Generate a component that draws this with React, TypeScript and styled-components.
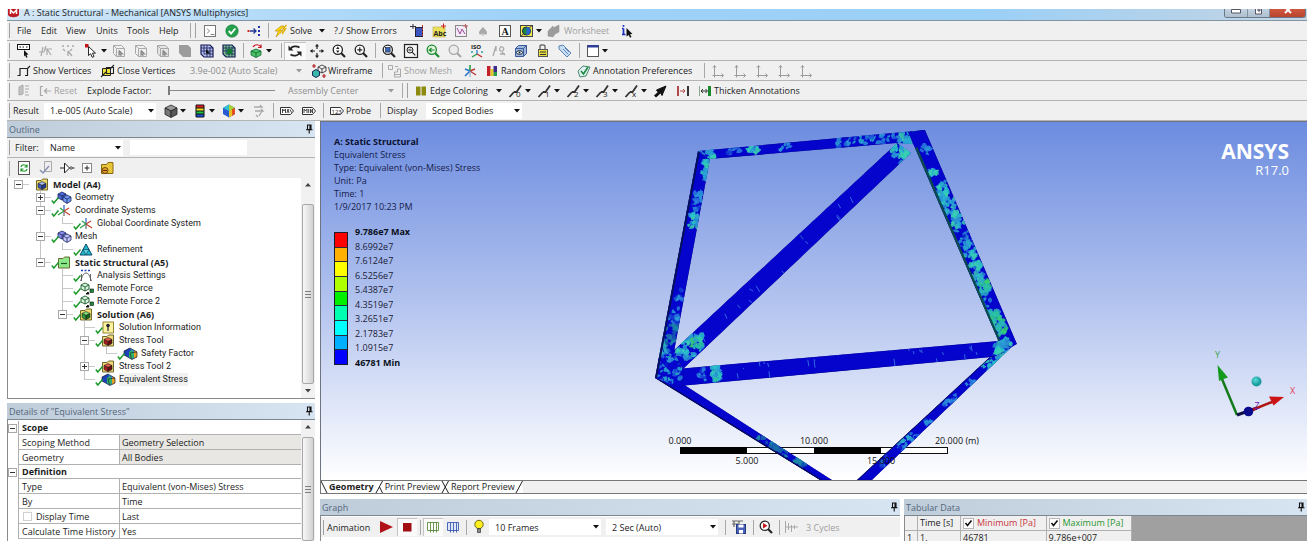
import React from "react";
import styled, { createGlobalStyle, css } from "styled-components";

const GlobalStyle = createGlobalStyle`
  *, *::before, *::after { box-sizing: border-box; }
  body { margin: 0; background: #fff; }
  body, button, input, select {
    font-family: "Open Sans", "Noto Sans", sans-serif;
    font-size: 9px;
    line-height: 13px;
    color: #1c1c1c;
  }
  button { border: 0; padding: 0; background: none; cursor: pointer; }
`;

/* ---------- shell ---------- */

const Page = styled.div`
  height: 100vh;
  padding: 9px 2px 5px 7px;
  display: flex;
  flex-direction: column;
  overflow: hidden;
`;

const TitleBar = styled.header`
  display: flex;
  align-items: flex-start;
  flex: none;
  height: 12px;
  overflow: hidden;
  background: linear-gradient(90deg, #d3e6f5 0, #b3dbf8 20%, #9fd2f8 40%, #9bd0f7 75%, #b4d2ea 90%, #c6d6e4 100%);
  border-bottom: 1px solid #8394a3;
`;

const TitleText = styled.h1`
  flex: 1;
  margin: -3px 0 0 1px;
  font-size: 9px;
  font-weight: 400;
  line-height: 13px;
  white-space: nowrap;
`;

const WindowButtons = styled.div`
  display: flex;
  height: 9px;
  margin-right: 1px;
  border: 1px solid #68798a;
  border-top: 0;
  border-radius: 0 0 3px 3px;
  overflow: hidden;
`;

const WindowButton = styled.button<{ $close?: boolean }>`
  display: flex;
  justify-content: center;
  width: ${(p) => (p.$close ? 36 : 22)}px;
  background: ${(p) => (p.$close ? "linear-gradient(#d0573f, #b9432c)" : "linear-gradient(#c3d2e0, #aebfd0)")};
  & + & { border-left: 1px solid #8293a4; }
`;

const Main = styled.main`
  flex: 1;
  min-height: 0;
  display: grid;
  grid-template-columns: 308px minmax(0, 1fr);
  gap: 5px;
`;

const Column = styled.div<{ $gap?: number }>`
  display: flex;
  flex-direction: column;
  min-width: 0;
  min-height: 0;
  gap: ${(p) => p.$gap ?? 0}px;
`;

/* ---------- toolbars ---------- */

const Toolbar = styled.div<{ $plain?: boolean }>`
  display: flex;
  align-items: center;
  flex: none;
  height: 20px;
  background: #f0f0f0;
  white-space: nowrap;
  overflow: hidden;
  ${(p) => !p.$plain && css`border-bottom: 1px solid #b4b4b4;`}
`;

const Grip = styled.span`
  flex: none;
  width: 6px;
  height: 15px;
  &::before {
    content: "";
    display: block;
    width: 1px;
    height: 15px;
    margin-left: 2px;
    background: #a0a0a0;
  }
`;

const Sep = styled.span`
  flex: none;
  width: 6px;
  height: 15px;
  &::before {
    content: "";
    display: block;
    width: 1px;
    height: 15px;
    margin-left: 3px;
    background: #a8a8a8;
  }
`;

const Gap = styled.span<{ $w: number }>`
  flex: none;
  width: ${(p) => p.$w}px;
`;

const IconButton = styled.button<{ $on?: boolean; $tight?: boolean }>`
  display: flex;
  align-items: center;
  justify-content: center;
  flex: none;
  width: ${(p) => (p.$tight ? 20 : 22)}px;
  height: 18px;
  ${(p) => p.$on && css`background: #fafafa; box-shadow: inset 1px 1px 0 #c4c4c4;`}
`;

const LabelButton = styled.button<{ $w: number; $off?: boolean; $pad?: number; $gap?: number }>`
  display: flex;
  align-items: center;
  gap: ${(p) => p.$gap ?? 1}px;
  flex: none;
  width: ${(p) => p.$w}px;
  padding-left: ${(p) => p.$pad ?? 0}px;
  color: ${(p) => (p.$off ? "#a0a0a0" : "#1c1c1c")};
  white-space: nowrap;
`;

const Caption = styled.label<{ $w: number; $pad?: number }>`
  flex: none;
  width: ${(p) => p.$w}px;
  padding-left: ${(p) => p.$pad ?? 0}px;
`;

const MenuButton = styled.button`
  display: flex;
  align-items: center;
  flex: none;
  width: 24px;
  height: 18px;
`;

const CaretBox = styled.button`
  display: flex;
  align-items: center;
  justify-content: center;
  flex: none;
  width: 8px;
  height: 18px;
`;

const ComboBox = styled.span<{ $w: number; $white?: boolean }>`
  display: grid;
  grid-template-columns: minmax(0, 1fr) 10px;
  align-items: center;
  flex: none;
  width: ${(p) => p.$w}px;
  height: 16px;
  background: ${(p) => (p.$white ? "#fff" : "transparent")};
  select {
    grid-area: 1 / 1 / 2 / 3;
    appearance: none;
    height: 16px;
    border: 0;
    padding: 0 0 0 6px;
    background: none;
    opacity: 1;
  }
  select:disabled { color: #8e8e8e; }
  svg { grid-area: 1 / 2; pointer-events: none; justify-self: center; }
`;

const Slider = styled.input`
  appearance: none;
  flex: none;
  width: 107px;
  height: 10px;
  margin: 0;
  background: linear-gradient(#8a8a8a, #8a8a8a) center / 100% 1px no-repeat;
  &::-webkit-slider-thumb {
    appearance: none;
    width: 2px;
    height: 9px;
    background: #7a7a7a;
  }
`;

const Svg = styled.svg`
  display: block;
  flex: none;
  width: 16px;
  height: 16px;
`;

const CaretSvg = styled.svg`
  display: block;
  flex: none;
  width: 6px;
  height: 4px;
`;

const Caret = ({ off }: { off?: boolean }) => (
  <CaretSvg viewBox="0 0 6 4"><path d="M0 0h6L3 3.6z" fill={off ? "#9a9a9a" : "#111"} /></CaretSvg>
);

function Combo({ id, value, w, white, off, label }: { id: string; value: string; w: number; white?: boolean; off?: boolean; label?: string }) {
  return (
    <ComboBox $w={w} $white={white}>
      <select id={id} disabled={off} defaultValue={value} aria-label={label}>
        <option>{value}</option>
      </select>
      <Caret off={off} />
    </ComboBox>
  );
}

/* ---------- icons ---------- */

const G = "#a9a9a9";

const Lens = ({ c = "#222", fill = "#fff", children }: { c?: string; fill?: string; children?: React.ReactNode }) => (
  <>
    <path d="M10 10l4 4" stroke={c} strokeWidth="2.2" />
    <circle cx="6.8" cy="6.8" r="4.6" fill={fill} stroke={c} strokeWidth="1.3" />
    {children}
  </>
);

const Cube = ({ top, left, right, line = "#222" }: { top: string; left: string; right: string; line?: string }) => (
  <g stroke={line} strokeWidth=".8" strokeLinejoin="round">
    <path d="M2 5l6-3 6 3-6 3z" fill={top} />
    <path d="M2 5l6 3v6.4L2 11.4z" fill={left} />
    <path d="M14 5L8 8v6.4l6-3z" fill={right} />
  </g>
);

const SelBox = ({ fill = "none", c = G }: { fill?: string; c?: string }) => (
  <g stroke={c} fill="none">
    <path d="M2.500 2.500h8l3 3v8h-8l-3-3z" fill={fill} />
    <path d="M2.500 2.500l3 3h8M5.500 5.500v8" />
    <path d="M8 7.500v4.500l1.200-1 1 2M8 7.500l3.500 3.500H9.500" strokeWidth="1.200" stroke="#8a8a8a" />
  </g>
);

const EdgeMark = ({ n }: { n: string }) => (
  <>
    <path d="M1.500 14L6 9M6 9h2.500L13 2.500" stroke="#333" strokeWidth="1.800" fill="none" />
    <text x="8" y="14" fontSize="8" fill="#222">{n}</text>
  </>
);

const icons: Record<string, React.ReactNode> = {
  console: <><rect x="2.500" y="2.500" width="11" height="11" fill="#fff" stroke="#777" /><path d="M5 5.500l2.500 2.500L5 10.500M8.500 11.500h4" stroke="#888" fill="none" /></>,
  check: <><circle cx="8" cy="8" r="6.200" fill="#23a04c" stroke="#11763a" strokeWidth=".6" /><path d="M4.800 8l2.300 2.600L11.300 5.500" stroke="#fff" strokeWidth="1.900" fill="none" /></>,
  align: <><path d="M1.500 8h2" stroke="#c22" strokeWidth="2" /><path d="M4 8h6M7.500 5.500L10 8l-2.500 2.500" stroke="#223a9a" fill="none" strokeWidth="1.300" /><path d="M13 3v10" stroke="#2233aa" strokeWidth="2" strokeDasharray="2 2" /></>,
  bolt: <><path d="M8 3L2 8h3.500L3 14l7-6.500H6.500L11 3z" fill="#ffd400" stroke="#b98a00" strokeWidth=".6" /><path d="M13.500 2L10 6h2.500L9 11" stroke="#e0b000" strokeWidth="1.400" fill="none" /></>,
  newPlane: <><path d="M1 3.500h6M4 1v5" stroke="#334" /><rect x="6.500" y="4.500" width="7" height="9" fill="#3d55c0" stroke="#223" /><path d="M13.500 2v12" stroke="#b33" strokeDasharray="2 1" /></>,
  abc: <><rect x="2" y="4" width="12" height="10" fill="#ece25a" stroke="#b8aa40" strokeWidth=".6" /><text x="2.500" y="12.500" fontSize="7" fontWeight="700" fill="#222">Abc</text><path d="M10 3h5M12.500.5v5" stroke="#c22" /></>,
  chart: <><rect x="2.500" y="2.500" width="11" height="11" fill="#f3ecf6" stroke="#888" /><path d="M4 5l3 6 2-5 3 5" stroke="#a04aa0" fill="none" /><path d="M10 3h5M12.500 1v4" stroke="#c66" /></>,
  spade: <path d="M8 4c3 3 4 4 4 6s-3 2-3.500 0v3h-1v-3C7 12 4 12 4 10s1-3 4-6z" fill={G} />,
  letterA: <><rect x="2.500" y="2.500" width="11" height="11" fill="#fff" stroke="#555" /><text x="4.500" y="12" fontSize="10" fontWeight="700" fontFamily="Liberation Serif, serif" fill="#111">A</text></>,
  picture: <><rect x="1.500" y="2.500" width="12" height="11" fill="#f5e84a" stroke="#444" /><path d="M1.500 13.500l3-2.500M13.500 2.500l-3 2" stroke="#444" /><circle cx="7.500" cy="8" r="4" fill="#1e8a4a" stroke="#124" /><path d="M7.500 4a4 4 0 010 8z" fill="#2a62c8" /></>,
  worksheet: <path d="M1 8l5-5v2l6-3v7l-4 2-2 3-5-1z" fill="#9c9c9c" stroke="#8c8c8c" strokeWidth=".5" />,
  infoCursor: <><path d="M4.500 2v1.800M4.500 5.500v6M3 5.500h1.500M3 11.500h3.500" stroke="#1b2fc0" strokeWidth="1.700" fill="none" /><path d="M7.500 5l6 6-2.500.2L12.500 14l-1.500.8-1.300-2.900L7.500 13.500z" fill="#111" /></>,

  pickLabel: <><rect x="1.500" y="1.500" width="12" height="5" fill="#fff" stroke="#111" /><path d="M3.500 4h1.500M6.500 4H8M10 4h1.500" stroke="#111" /><path d="M8 7l4.500 4.500-2 .2 1 2.500-1.200.6-1.200-2.600L8 13.500z" fill="#111" /></>,
  grayPick1: <path d="M1 9h5M5 4l-2 9M8 3L6 9M7 6l7 0M9 6l4 6M9 6v6" stroke={G} fill="none" strokeWidth="1.200" />,
  grayPick2: <path d="M2 3h2M7 3h2M12 3h2M3 6l2 2M12 6l-2 2M8 8l4 5M8 8v5" stroke={G} fill="none" strokeWidth="1.300" />,
  cursor: <><rect x="1" y="1" width="3.500" height="3.500" fill="#c4161c" /><path d="M4.500 3.500v9l2.200-1.800 1.500 3.600 1.800-.8-1.500-3.400h3z" fill="#fff" stroke="#111" strokeWidth=".9" /></>,
  selVertex: <SelBox />,
  selEdge: <SelBox />,
  selFace: <SelBox fill="#e4e4e4" />,
  selBody: <path d="M2 2h9l3 3v9H6L2 10z" fill="#9c9c9c" />,
  selNode: <><path d="M2 2h9l3 3v9H5L2 11z" fill="#b7c3ee" stroke="#141a55" strokeWidth="1.200" /><path d="M5 2v9M8 2v12M2 5h12M2 8h12M5 11h9M11 4v10" stroke="#141a55" strokeWidth=".8" /><path d="M7 6l4.500 4.500H7z" fill="#111" /></>,
  selElem: <><path d="M2 2h9l3 3v9H5L2 11z" fill="#7fc694" stroke="#141a55" strokeWidth="1.200" /><path d="M5 2v9M8 2v12M2 5h12M2 8h12M5 11h9M11 4v10" stroke="#141a55" strokeWidth=".8" /><rect x="6" y="6" width="5" height="5" fill="#127a32" /></>,
  extend: <><path d="M2 8l5-2 5 2v4l-5 2.500L2 12z" fill="#4cc36a" stroke="#14662c" strokeWidth=".8" /><path d="M2 8l5 2 5-2M7 10v4.500" stroke="#14662c" fill="none" strokeWidth=".8" /><path d="M4 4c2-3 6-3 8 0M12 1.500V4.500H9" stroke="#c4161c" fill="none" strokeWidth="1.200" /></>,
  rotate: <><path d="M3.500 6c1-3 6-3.500 9-1.500M12.500 10c-1 3-6 3.500-9 1.500" stroke="#222" fill="none" strokeWidth="1.700" /><path d="M1.500 2.500v5h5zM14.500 13.500v-5h-5z" fill="#222" /></>,
  pan: <><path d="M8 3v3M8 10v3M3 8h3M10 8h3" stroke="#222" strokeWidth="1.200" /><path d="M8 .8L10 3.600H6zM8 15.200L6 12.400h4zM.8 8l2.800-2v4zM15.200 8l-2.800 2V6z" fill="#222" /></>,
  zoomUpDown: <Lens><path d="M6.800 3.500L8.500 6H5.100zM6.800 10.100L5.100 7.600h3.400z" fill="#222" /></Lens>,
  zoomIn: <Lens><path d="M4.300 6.800h5M6.800 4.300v5" stroke="#222" strokeWidth="1.200" /></Lens>,
  zoomBlue: <Lens><rect x="4.500" y="4.500" width="4.600" height="4.600" fill="#3a63b8" stroke="#123" strokeWidth=".6" /></Lens>,
  zoomBox: <><rect x="1.500" y="1.500" width="13" height="13" fill="#f4f4f4" stroke="#222" strokeWidth="1.200" /><circle cx="7" cy="7" r="3" fill="#ddd" stroke="#222" /><path d="M5.500 7h3M9.300 9.300l3 3" stroke="#222" strokeWidth="1.200" /></>,
  zoomGreen: <Lens c="#1b8a2c" fill="#dff3df"><path d="M9.500 7H4.500l2-2M4.500 7l2 2" stroke="#1b8a2c" strokeWidth="1.200" fill="none" /></Lens>,
  zoomGray: <Lens c="#a6a6a6" fill="#ececec" />,
  iso: <><text x="2" y="6" fontSize="6" fontWeight="700" fill="#111">ISO</text><path d="M8 7v5" stroke="#2a8ad0" strokeWidth="1.400" /><path d="M8 11l-5 3" stroke="#27a045" strokeWidth="1.400" /><path d="M8 11l5 3" stroke="#c03030" strokeWidth="1.400" /><circle cx="3" cy="9" r="1" fill="#27a0a0" /><circle cx="13" cy="9" r="1" fill="#27a0a0" /></>,
  lookAt: <path d="M2 13L5 3M5 3v5M9 4c4-1 5 3 2 4s-3-3-1-4M11 9l3 3M9 11h5" stroke={G} fill="none" strokeWidth="1.300" />,
  blueBox: <><path d="M2.500 5.500l3-3h8v8l-3 3h-8z" fill="#9fb6dd" stroke="#3b5a99" /><path d="M2.500 5.500h8v8M10.500 5.500l3-3" stroke="#3b5a99" fill="none" /><ellipse cx="6.500" cy="9.500" rx="3" ry="1.800" fill="#fff" stroke="#123" /><circle cx="6.500" cy="9.500" r="1" fill="#123" /></>,
  stackTag: <><path d="M5 6V3c0-1.500 5-1.500 5 0v3" fill="none" stroke="#555" strokeWidth="1.200" /><rect x="3.500" y="6.500" width="9" height="7" fill="#e7de3f" stroke="#555" /><path d="M5 9h6M5 11.500h6" stroke="#333" /></>,
  tag: <><path d="M2 3l4-1 8 8-4 4-8-8z" fill="#c6dcf2" stroke="#4b78ac" strokeWidth=".9" /><path d="M6 6l5 5M8 5l4 4" stroke="#4b78ac" strokeWidth=".8" /></>,
  windowIcon: <><rect x="2.500" y="2.500" width="11" height="11" fill="#fff" stroke="#555" /><rect x="2.500" y="2" width="11" height="2.500" fill="#2d3f9a" /></>,

  showVert: <path d="M1.500 12.500H4V5.500h7.500v7H9M11.500 5.500L14 3" stroke="#222" fill="none" strokeWidth="1.200" />,
  closeVert: <><path d="M2.500 5.500h8v7h-8z" fill="#f0e23a" stroke="#222" /><path d="M6.500 4.500h7v6h-7zM1 14l5-5M10 6l4-4" stroke="#222" fill="none" strokeWidth="1.100" /></>,
  wireframe: <><path d="M7 4l4-2 4 2v4l-4 2-4-2z" fill="#f4f4f4" stroke="#222" strokeWidth=".8" /><path d="M7 4l4 2 4-2M11 6v4" stroke="#222" strokeWidth=".8" fill="none" /><path d="M1.500 8.500l3.500-2 3.500 2v4L5 14.500l-3.500-2z" fill="#37b8a8" stroke="#114" strokeWidth=".9" /><path d="M3 1v4M1 3h4M13 11v4M11 13h4" stroke="#b02020" strokeWidth="1.200" /></>,
  showMesh: <path d="M1.500 2.500h4v4h-4zM8 3.500h3M10.500 6v3h-3v5h6V6zM7.500 11.500h6" stroke={G} fill="none" />,
  axes: <><path d="M8 8V2" stroke="#27a045" strokeWidth="1.600" /><path d="M8 8l6 4M8 8l5-2" stroke="#c03a3a" strokeWidth="1.400" /><path d="M8 8l-5 5M8 8L3 6" stroke="#2d77c8" strokeWidth="1.600" /><path d="M8 8v6" stroke="#7ac" /></>,
  random: <><path d="M3 3h3.500v10H3z" fill="#c4202a" /><path d="M6.500 6h3v7h-3z" fill="#e7c62a" /><path d="M9.500 3H13v6H9.500z" fill="#3a2c8a" /><path d="M9.500 9H13v4H9.500z" fill="#2a9a4a" /></>,
  annotate: <><path d="M2 8l5-5 7 1-4 9-6 1z" fill="#dff0f4" stroke="#4a8a6a" /><path d="M5 8l2.500 3L12 4" stroke="#1b8a3c" strokeWidth="1.600" fill="none" /></>,
  triad1: <path d="M4.500 2.500v10h9M3 4.500l1.500-2 1.500 2M11.500 10.500l2 2-2 2M2.500 12.500h4M4.500 10.500v4" stroke="#9a9a9a" fill="none" />,

  explode: <path d="M3 12V4l4-2v9zM9 3h4M9 6h4M9 9h3M9 12h4" fill="#c2c2c2" stroke={G} />,
  reset: <path d="M6 3.500H3.500v9H6M14 8H7.500M10 5.500L7.500 8l2.500 2.500" stroke={G} fill="none" strokeWidth="1.200" />,
  edgeColor: <><rect x="3" y="3.500" width="4.500" height="9" fill="#8d8a10" /><rect x="8.500" y="3.500" width="4.500" height="9" fill="#8d8a10" /></>,
  boldArrow: <><path d="M2 13.500L7 9" stroke="#111" strokeWidth="3" /><path d="M3.500 7L13 3l-4 9.500-1.500-3-3-1z" fill="#111" stroke="#111" /></>,
  narrow: <><path d="M3 3v10" stroke="#b04a4a" strokeWidth="2" /><path d="M13 3v10" stroke="#333" strokeWidth="2" /><path d="M5 8h5M8 6l2 2-2 2" stroke="#b04a4a" fill="none" /></>,
  thicken: <><path d="M2.500 3v10" stroke="#8a8" /><path d="M12.500 3v10" stroke="#1b8a2c" strokeWidth="3" /><path d="M4 8h6M6 6L4 8l2 2M8.500 6l2 2-2 2" stroke="#333" fill="none" /></>,

  cubeGray: <Cube top="#9a9a9a" left="#777" right="#585858" />,
  bands: <><path d="M4 2h8v3H4z" fill="#e02020" /><path d="M4 5h8v3H4z" fill="#f2e020" /><path d="M4 8h8v3H4z" fill="#20c040" /><path d="M4 11h8v3H4z" fill="#2050d0" /><path d="M4 2h8v12H4zM4 5h8M4 8h8M4 11h8" stroke="#111" fill="none" /></>,
  cubeColor: <><path d="M8 1.500l6 3.500v6L8 14.500 2 11V5z" fill="#2a5ad0" /><path d="M2 5l6-3.500L8 8z" fill="#30c0d0" /><path d="M8 1.500L14 5 8 8z" fill="#a8d830" /><path d="M14 5v6l-3 2V6z" fill="#e05020" /><path d="M8 8l3-1.500V13l-3 1.500z" fill="#e8c020" /></>,
  vectors: <path d="M3 4h8l-2-2M4 8h8l-2-2M11 8l-3 5M5 12l2 2" stroke={G} fill="none" strokeWidth="1.300" />,
  max: <><path d="M1.500 4.500h10l3 3.500-3 3.500h-10z" fill="#fff" stroke="#333" /><path d="M3.500 10V6l1.500 2L6.500 6v4M8 10l1-4 1 4M11 6.500l1.500 3" stroke="#333" fill="none" strokeWidth=".9" /></>,
  min: <><path d="M1.500 4.500h10l3 3.500-3 3.500h-10z" fill="#fff" stroke="#333" /><path d="M3 10V6l1.500 2L6 6v4M7.700 6v4M9.500 10V6l2 4V6" stroke="#333" fill="none" strokeWidth=".9" /></>,
  probe: <><path d="M1.500 4.500h10l3 3.500-3 3.500h-10z" fill="#fff" stroke="#333" /><text x="2.500" y="10.500" fontSize="6" fill="#222">123</text></>,

  refresh: <><rect x="2.500" y="1.500" width="11" height="13" fill="#fff" stroke="#555" /><path d="M5 7c.5-3 5-3 6 0M11 9c-.5 3-5 3-6 0M11 4.500V7H8.500M5 11.500V9h2.500" stroke="#1b9a2c" fill="none" strokeWidth="1.200" /></>,
  docCheck: <><path d="M6.500 1.500h7v10h-7z" fill="#eee" stroke="#aaa" /><path d="M2 10l3 3 6-7" stroke="#8a8fb5" strokeWidth="1.500" fill="none" /></>,
  gate: <><path d="M5.500 3v10l5-5z" fill="#fff" stroke="#222" /><path d="M1 8h4M13 8h2.500" stroke="#222" /><circle cx="12" cy="8" r="1.200" fill="#fff" stroke="#222" strokeWidth=".8" /></>,
  plusBox: <><rect x="3.500" y="3.500" width="9" height="9" fill="#fff" stroke="#888" /><path d="M5.500 8h5M8 5.500v5" stroke="#222" /></>,
  folderLock: <><path d="M2.500 4.500h5l1.500-2h5v11H2.500z" fill="#e8c63a" stroke="#8a6a10" /><circle cx="6" cy="10.500" r="3" fill="#e0a02a" stroke="#5a2a08" strokeWidth=".8" /><path d="M4 10.500h4" stroke="#5a2a08" /></>,

  play: <path d="M2 2l13 6-13 6z" fill="#b01218" />,
  stop: <path d="M4 4h8.500v8.500H4z" fill="#a00d12" />,
  frames1: <path d="M2.500 3.500h11v8h-11zM5.500 3.500v10M8.500 3.500v10M11.500 3.500v10" stroke="#5a8a3a" fill="#fff" strokeWidth=".9" />,
  frames2: <path d="M2.500 3.500h11v8h-11zM5.500 3.500v10M8.500 3.500v10M11.500 3.500v10" stroke="#3a5ab0" fill="#dfe6f6" strokeWidth=".9" />,
  bulb: <><circle cx="8" cy="5.500" r="4.200" fill="#ffee20" stroke="#6a6a10" /><path d="M6.500 9.500h3v4h-3z" fill="#888" stroke="#333" strokeWidth=".7" /></>,
  save: <><path d="M1 2h11M1 5h6M3 2v6M8 2v3" stroke="#666" strokeWidth="1.200" /><rect x="5.500" y="5.500" width="9" height="9" fill="#4a63b8" stroke="#223a80" /><path d="M7.500 5.500h5v3h-5zM8 11h4v3.500H8z" fill="#fff" /></>,
  zoomPlay: <Lens c="#222"><path d="M5 4l4.500 2.800L5 9.600z" fill="#c01818" /></Lens>,
  cycles: <path d="M2.500 2v12M2 8h13M5.500 4v7M8.500 6v7M11.500 6v4" stroke={G} fill="none" />,
};

const Icon = ({ n }: { n: string }) => <Svg viewBox="0 0 16 16" aria-hidden="true">{icons[n]}</Svg>;
const Tool = ({ n, on, tight }: { n: string; on?: boolean; tight?: boolean }) => (
  <IconButton $on={on} $tight={tight} aria-label={n}><Icon n={n} /></IconButton>
);
const Menu = ({ n }: { n: string }) => <MenuButton aria-label={n}><Icon n={n} /><Gap $w={1} /><Caret /></MenuButton>;

const EdgeMenu = ({ n }: { n: string }) => (
  <MenuButton aria-label={"Edges " + n}><Svg viewBox="0 0 16 16"><EdgeMark n={n} /></Svg><Gap $w={1} /><Caret /></MenuButton>
);

const menus: [string, number][] = [["File", 24], ["Edit", 25], ["View", 30], ["Units", 31], ["Tools", 32], ["Help", 32]];

function Toolbars() {
  return (
    <>
      <Toolbar as="nav">
        <Grip />
        {menus.map(([name, w]) => <LabelButton key={name} $w={w} $pad={4}>{name}</LabelButton>)}
        <Sep /><Grip />
        <Tool n="console" /><Tool n="check" /><Tool n="align" />
        <Sep /><Gap $w={2} />
        <LabelButton $w={45}><Icon n="bolt" />Solve</LabelButton>
        <CaretBox aria-label="Solve options"><Caret /></CaretBox><Gap $w={4} />
        <LabelButton $w={76} $pad={4}>?./ Show Errors</LabelButton>
        {["newPlane", "abc", "chart", "spade", "letterA"].map((n) => <Tool key={n} n={n} />)}
        <Gap $w={3} /><Menu n="picture" /><Gap $w={4} />
        <LabelButton $w={69} $off><Icon n="worksheet" />Worksheet</LabelButton>
        <Tool n="infoCursor" />
      </Toolbar>
      <Toolbar>
        <Grip />
        {["pickLabel", "grayPick1", "grayPick2"].map((n) => <Tool key={n} n={n} />)}
        <Gap $w={5} /><Menu n="cursor" />
        {["selVertex", "selEdge", "selFace", "selBody", "selNode", "selElem"].map((n) => <Tool key={n} n={n} />)}
        <Sep /><Gap $w={3} /><Menu n="extend" /><Gap $w={5} />
        <Sep /><Tool n="rotate" on />
        {["pan", "zoomUpDown", "zoomIn"].map((n) => <Tool key={n} n={n} />)}
        <Sep />
        {["zoomBlue", "zoomBox", "zoomGreen", "zoomGray", "iso", "lookAt", "blueBox", "stackTag", "tag"].map((n) => <Tool key={n} n={n} />)}
        <Sep /><Gap $w={3} /><Menu n="windowIcon" />
      </Toolbar>
      <Toolbar>
        <Grip /><Gap $w={3} />
        <LabelButton $w={84}><Icon n="showVert" />Show Vertices</LabelButton>
        <LabelButton $w={84}><Icon n="closeVert" />Close Vertices</LabelButton>
        <Combo id="tolerance" label="Vertex tolerance" value="3.9e-002 (Auto Scale)" w={120} off /><Gap $w={7} />
        <LabelButton $w={68}><Icon n="wireframe" />Wireframe</LabelButton>
        <Sep /><Gap $w={2} />
        <LabelButton $w={72} $off><Icon n="showMesh" />Show Mesh</LabelButton>
        <Tool n="axes" /><Gap $w={3} />
        <LabelButton $w={92}><Icon n="random" />Random Colors</LabelButton>
        <LabelButton $w={125}><Icon n="annotate" />Annotation Preferences</LabelButton>
        <Sep />
        {[1, 2, 3, 4, 5].map((k) => <Tool key={k} n="triad1" />)}
      </Toolbar>
      <Toolbar>
        <Grip /><Tool n="explode" /><Gap $w={2} />
        <LabelButton $w={46} $off><Icon n="reset" />Reset</LabelButton>
        <Caption htmlFor="explode" $w={78} $pad={4}>Explode Factor:</Caption><Gap $w={7} />
        <Slider id="explode" type="range" min={0} max={100} defaultValue={0} /><Gap $w={7} />
        <Combo id="center" label="Explode center" value="Assembly Center" w={114} off /><Gap $w={3} />
        <Sep /><Grip /><Gap $w={2} />
        <LabelButton $w={82}><Icon n="edgeColor" />Edge Coloring</LabelButton>
        <CaretBox aria-label="Edge coloring options"><Caret /></CaretBox>
        {["0", "1", "2", "3", "x"].map((n) => <React.Fragment key={n}><Gap $w={5} /><EdgeMenu n={n} /></React.Fragment>)}
        <Gap $w={2} /><Tool n="boldArrow" /><Tool n="narrow" /><Gap $w={3} />
        <LabelButton $w={110}><Icon n="thicken" />Thicken Annotations</LabelButton>
      </Toolbar>
      <Toolbar>
        <Grip />
        <Caption htmlFor="result" $w={31}>Result</Caption>
        <Combo id="result" value="1.e-005 (Auto Scale)" w={112} white /><Gap $w={7} />
        <Menu n="cubeGray" /><Gap $w={5} /><Menu n="bands" /><Gap $w={5} /><Menu n="cubeColor" /><Gap $w={3} />
        <Tool n="vectors" /><Sep /><Tool n="max" /><Tool n="min" /><Sep /><Gap $w={3} />
        <LabelButton $w={48}><Icon n="probe" />Probe</LabelButton>
        <Sep />
        <Caption htmlFor="display" $w={43} $pad={4}>Display</Caption>
        <Combo id="display" value="Scoped Bodies" w={96} white />
      </Toolbar>
    </>
  );
}

/* ---------- panels ---------- */

const Panel = styled.section<{ $grow?: boolean; $h?: number }>`
  display: flex;
  flex-direction: column;
  min-width: 0;
  min-height: 0;
  flex: ${(p) => (p.$grow ? "1 1 0" : "none")};
  ${(p) => p.$h && css`height: ${p.$h}px;`}
  overflow: hidden;
`;

const PanelHead = styled.h2`
  display: flex;
  align-items: center;
  justify-content: space-between;
  flex: none;
  height: 17px;
  margin: 0;
  padding: 0 1px 0 2px;
  font-size: 9px;
  font-weight: 400;
  color: #54667a;
  background: linear-gradient(90deg, #bfcddb, #d7e5f3);
  border-bottom: 1px solid #7d8790;
`;

const PinSvg = styled.svg`
  width: 10px;
  height: 10px;
`;

const Pin = () => (
  <PinSvg viewBox="0 0 10 10"><path d="M3.500 1v4.500h3.500V1zM6 1v4.500M2 5.800h6.500M5.200 6v3.500" stroke="#111" fill="none" strokeWidth="1.100" /></PinSvg>
);

const PinButton = styled.button`
  display: flex;
`;

const Head = ({ title }: { title: string }) => (
  <PanelHead>{title}<PinButton aria-label={"Pin " + title}><Pin /></PinButton></PanelHead>
);

const ScrollBar = styled.div`
  display: flex;
  flex-direction: column;
  align-items: center;
  flex: none;
  width: 14px;
  background: #f1f1f1;
  svg { margin: 5px 0; }
`;

const Thumb = styled.div<{ $top?: number }>`
  display: flex;
  align-items: center;
  justify-content: center;
  flex: 1;
  width: 12px;
  margin-top: ${(p) => p.$top ?? 0}px;
  border: 1px solid #a8a8a8;
  border-radius: 2px;
  background: linear-gradient(90deg, #f7f7f7, #d2d2d2);
  &::before {
    content: "";
    width: 6px;
    height: 7px;
    background: repeating-linear-gradient(#808080 0 1px, transparent 1px 3px);
  }
`;

const Arrow = ({ down }: { down?: boolean }) => (
  <CaretSvg viewBox="0 0 6 4"><path d={down ? "M0 0h6L3 3.500z" : "M0 3.500h6L3 0z"} fill="#444" /></CaretSvg>
);

const SearchBox = styled.input`
  width: 117px;
  height: 15px;
  border: 0;
  background: #fff;
`;

/* ---------- outline tree ---------- */

const TreeArea = styled.div`
  display: flex;
  flex: 1;
  min-height: 0;
  background: #fff;
  border-left: 1px solid #8a8a8a;
  border-bottom: 1px solid #8a8a8a;
`;

const TreeList = styled.ul`
  flex: 1;
  margin: 0 0 0 -1px;
  padding: 0;
  list-style: none;
`;

const TreeItem = styled.li`
  display: flex;
  height: 13px;
  white-space: nowrap;
`;

const Guide = styled.span<{ $line: "none" | "full" | "half"; $elbow?: boolean }>`
  display: flex;
  align-items: center;
  justify-content: center;
  flex: none;
  width: 22px;
  height: 13px;
  background:
    linear-gradient(#c4c4c4, #c4c4c4) 11px 0 / ${(p) => (p.$line === "none" ? "0 0" : p.$line === "full" ? "1px 13px" : "1px 7px")} no-repeat,
    linear-gradient(#cacaca, #cacaca) 11px 6px / ${(p) => (p.$elbow ? "11px 1px" : "0 0")} no-repeat;
`;

const Expander = styled.button`
  display: block;
  width: 9px;
  height: 9px;
  background: #fff;
  svg { display: block; width: 9px; height: 9px; }
`;

const ExpandBox = ({ open }: { open: boolean }) => (
  <Expander aria-label={open ? "Collapse" : "Expand"}>
    <svg viewBox="0 0 9 9"><rect x=".5" y=".5" width="8" height="8" fill="#fff" stroke="#a8a8a8" /><path d={open ? "M2 4.500h5" : "M2 4.500h5M4.500 2v5"} stroke="#333" /></svg>
  </Expander>
);

const NodeSvg = styled.svg`
  display: block;
  flex: none;
  width: 22px;
  height: 13px;
  overflow: visible;
`;

const NodeText = styled.span<{ $bold?: boolean; $picked?: boolean }>`
  margin-left: 2px;
  font-family: ${(p) => (p.$bold ? '"Open Sans", "Noto Sans", sans-serif' : 'Roboto, "Liberation Sans", sans-serif')};
  font-weight: ${(p) => (p.$bold ? 700 : 400)};
  background: ${(p) => (p.$picked ? "#f1f1f1" : "transparent")};
`;

const Folder = ({ fill, children }: { fill: string; children?: React.ReactNode }) => (
  <><path d="M7.500 2.500h4.500l1.500-1.500h5v11h-11z" fill={fill} stroke="#5d5a20" strokeWidth=".9" />{children}</>
);

const MiniCube = ({ a, b, c }: { a: string; b: string; c: string }) => (
  <g stroke="#222" strokeWidth=".6"><path d="M9 5.500l4-2 4 2-4 2z" fill={a} /><path d="M9 5.500l4 2v4l-4-2z" fill={b} /><path d="M17 5.500l-4 2v4l4-2z" fill={c} /></g>
);

const Blocks = ({ a, b }: { a: string; b: string }) => (
  <g stroke="#1a2360" strokeWidth=".8">
    <path d="M7 3l4-2 4 2v4l-4 2-4-2z" fill={a} /><path d="M7 3l4 2 4-2M11 5v4" fill="none" />
    <path d="M12 6l4-2 4 2v4l-4 2.500L12 10z" fill={b} /><path d="M12 6l4 2 4-2M16 8v4" fill="none" />
  </g>
);

const MiniAxes = () => (
  <g fill="none" strokeWidth="1.200"><path d="M13 7V1" stroke="#2a62c8" /><path d="M13 7l6 4M13 7l5-3" stroke="#c8402a" /><path d="M13 7l-6 4M13 7l-4-3" stroke="#27a045" /><path d="M13 7v5" stroke="#666" /></g>
);

const Contour = () => (
  <>
    <path d="M7 4l6-3 7 4v5l-5 2.500L7 8z" fill="#2a7ad0" />
    <path d="M7 4l6-3 1 4-2 5-5-2z" fill="#1e40b8" />
    <path d="M12 5l3-2 2 4-1 5-4-2z" fill="#2cb860" />
    <path d="M17 3.500l3 1.500v5l-3 1.500z" fill="#e8a020" />
    <path d="M7 4l6-3 7 4v5l-5 2.500L7 8zM13 6l7-1M13 6l1.500 6" fill="none" stroke="#223" strokeWidth=".7" />
  </>
);

const Remote = () => (
  <><path d="M8 3l4-2 4 2v4l-4 2-4-2z" fill="#d8f4dc" stroke="#1b5a2c" strokeWidth=".9" /><path d="M8 3l4 2 4-2M12 5v4" stroke="#1b5a2c" fill="none" strokeWidth=".9" /><rect x="17" y="7" width="3.500" height="3.500" fill="#1b8a3c" stroke="#111" strokeWidth=".6" /><path d="M16 12h-3l2-2z" fill="#111" stroke="#111" /></>
);

const nodeIcons: Record<string, React.ReactNode> = {
  model: <Folder fill="#efd96a"><MiniCube a="#9fb8f0" b="#3a5ac0" c="#223a90" /></Folder>,
  geometry: <Blocks a="#4a6ad8" b="#6f9af0" />,
  axes: <MiniAxes />,
  mesh: <Blocks a="#8a90e8" b="#c3c6fa" />,
  refine: <><path d="M13 1l6 11H7z" fill="#22b8c8" stroke="#0a4a6a" /><path d="M10 6.500h6L13 12z" fill="#5cd0dc" stroke="#0a4a6a" strokeWidth=".7" /></>,
  env: <Folder fill="#8de88a"><path d="M10 7.500h6" stroke="#145a1c" strokeWidth="1.200" /></Folder>,
  settings: <><path d="M7 12c2-1 2-8 6-8s4 7 6 8M8.500 12V5M17.500 12V5" stroke="#555" fill="none" strokeWidth=".9" /><path d="M8 1.500h10" stroke="#2a40c0" strokeWidth="1.600" strokeDasharray="2 1.500" /></>,
  remote: <Remote />,
  solution: <Folder fill="#efd96a"><MiniCube a="#7ae07a" b="#28a038" c="#146a20" /></Folder>,
  info: <><rect x="8" y="1" width="10.500" height="11" fill="#fbf3a0" stroke="#8a7a20" strokeWidth=".9" /><circle cx="13" cy="4.500" r="1.800" fill="#223" /><path d="M13 5v5" stroke="#223" strokeWidth="1.200" /></>,
  stress: <Folder fill="#f3d97a"><MiniCube a="#e85a4a" b="#b01a1a" c="#6a0c0c" /></Folder>,
  contour: <Contour />,
};

type Node = { text: string; icon: string; depth: number; guides: boolean[]; last?: boolean; open?: boolean; bold?: boolean; picked?: boolean };

const tree: Node[] = [
  { text: "Model (A4)", icon: "model", depth: 0, guides: [], last: true, open: true, bold: true },
  { text: "Geometry", icon: "geometry", depth: 1, guides: [false], open: false },
  { text: "Coordinate Systems", icon: "axes", depth: 1, guides: [false], open: true },
  { text: "Global Coordinate System", icon: "axes", depth: 2, guides: [false, true], last: true },
  { text: "Mesh", icon: "mesh", depth: 1, guides: [false], open: true },
  { text: "Refinement", icon: "refine", depth: 2, guides: [false, true], last: true },
  { text: "Static Structural (A5)", icon: "env", depth: 1, guides: [false], last: true, open: true, bold: true },
  { text: "Analysis Settings", icon: "settings", depth: 2, guides: [false, false] },
  { text: "Remote Force", icon: "remote", depth: 2, guides: [false, false] },
  { text: "Remote Force 2", icon: "remote", depth: 2, guides: [false, false] },
  { text: "Solution (A6)", icon: "solution", depth: 2, guides: [false, false], last: true, open: true, bold: true },
  { text: "Solution Information", icon: "info", depth: 3, guides: [false, false, false] },
  { text: "Stress Tool", icon: "stress", depth: 3, guides: [false, false, false], open: true },
  { text: "Safety Factor", icon: "contour", depth: 4, guides: [false, false, false, true], last: true },
  { text: "Stress Tool 2", icon: "stress", depth: 3, guides: [false, false, false], open: false },
  { text: "Equivalent Stress", icon: "contour", depth: 3, guides: [false, false, false], last: true, picked: true },
];

function Outline() {
  return (
    <Panel $grow>
      <Head title="Outline" />
      <Toolbar>
        <Grip />
        <Caption htmlFor="filter" $w={31} $pad={2}>Filter:</Caption>
        <Combo id="filter" value="Name" w={79} white /><Gap $w={7} />
        <SearchBox aria-label="Filter text" />
      </Toolbar>
      <Toolbar $plain>
        <Grip />
        {["refresh", "docCheck"].map((n) => <Tool key={n} n={n} />)}
        {["gate", "plusBox", "folderLock"].map((n) => <Tool key={n} n={n} tight />)}
      </Toolbar>
      <TreeArea>
        <TreeList>
          {tree.map((n) => (
            <TreeItem key={n.text}>
              {n.guides.map((g, i) => <Guide key={i} $line={g ? "full" : "none"} />)}
              <Guide $line={n.depth === 0 ? "none" : n.last ? "half" : "full"} $elbow>
                {n.open !== undefined && <ExpandBox open={n.open} />}
              </Guide>
              <NodeSvg viewBox="0 0 22 13">
                {nodeIcons[n.icon]}
                {n.depth > 0 && <path d="M.8 9.500l2 2.500L7.500 6.500" stroke="#1e9a2c" strokeWidth="1.500" fill="none" />}
              </NodeSvg>
              <NodeText $bold={n.bold} $picked={n.picked}>{n.text}</NodeText>
            </TreeItem>
          ))}
        </TreeList>
        <ScrollBar><Arrow /><Thumb $top={12} /><Arrow down /></ScrollBar>
      </TreeArea>
    </Panel>
  );
}

/* ---------- details ---------- */

const DetailsArea = styled.div`
  display: flex;
  flex: 1;
  min-height: 0;
  overflow: hidden;
  border-left: 1px solid #8a8a8a;
`;

const DetailsTable = styled.table`
  flex: 1;
  align-self: flex-start;
  margin-top: 1px;
  border-collapse: separate;
  border-spacing: 0;
  table-layout: fixed;
  col.mark { width: 11px; }
  col.name { width: 100px; }
  td, th {
    height: 15px;
    padding: 0 0 0 3px;
    text-align: left;
    font-weight: 400;
    line-height: 13px;
    border-bottom: 1px solid #b0b0b0;
    white-space: nowrap;
  }
  td.mark {
    padding: 0;
    border-bottom: 0;
    border-right: 1px solid #b0b0b0;
  }
  tr.group th, tr.group td { height: 14px; font-weight: 700; }
  td.value { padding-left: 2px; border-left: 1px solid #b0b0b0; }
  td.locked { background: #e9e7e3; }
`;

const TinyCheck = styled.input`
  appearance: none;
  width: 9px;
  height: 9px;
  margin: 0 4px 0 1px;
  border: 1px solid #d0d0d0;
  background: #fff;
  vertical-align: -1px;
`;

const Group = ({ name }: { name: string }) => (
  <tr className="group"><td className="mark"><ExpandBox open /></td><th colSpan={2}>{name}</th></tr>
);

const Row = ({ name, value, locked, tick }: { name: string; value: string; locked?: boolean; tick?: boolean }) => (
  <tr>
    <td className="mark" />
    <th scope="row">{tick ? <label><TinyCheck type="checkbox" />{name}</label> : name}</th>
    <td className={locked ? "value locked" : "value"}>{value}</td>
  </tr>
);

function Details() {
  return (
    <Panel $h={138}>
      <Head title={'Details of "Equivalent Stress"'} />
      <DetailsArea>
        <DetailsTable>
          <colgroup><col className="mark" /><col className="name" /><col /></colgroup>
          <tbody>
            <Group name="Scope" />
            <Row name="Scoping Method" value="Geometry Selection" locked />
            <Row name="Geometry" value="All Bodies" locked />
            <Group name="Definition" />
            <Row name="Type" value="Equivalent (von-Mises) Stress" />
            <Row name="By" value="Time" />
            <Row name="Display Time" value="Last" tick />
            <Row name="Calculate Time History" value="Yes" />
          </tbody>
        </DetailsTable>
        <ScrollBar><Arrow /><Thumb $top={3} /></ScrollBar>
      </DetailsArea>
    </Panel>
  );
}

/* ---------- viewport ---------- */

const Viewport = styled.section`
  position: relative;
  flex: 1;
  min-height: 0;
  overflow: hidden;
  background: linear-gradient(#6c8cdf, #b5c5ef 52%, #fff);
  border-top: 1px solid #6d7480;
  border-left: 1px solid #6d7480;
`;

const SceneSvg = styled.svg`
  position: absolute;
  inset: 0;
  width: 100%;
  height: 100%;
`;

const TriadSvg = styled.svg`
  position: absolute;
  right: 7px;
  bottom: 54px;
  width: 90px;
  height: 80px;
`;

const Info = styled.div`
  position: absolute;
  left: 13px;
  top: 13px;
  color: #15204a;
  p { margin: 0; line-height: 13px; }
  p:first-child { font-weight: 700; color: #0a1030; }
`;

const Legend = styled.div`
  position: absolute;
  left: 13px;
  top: 103px;
  display: flex;
  gap: 7px;
  height: 145px;
`;

const Bands = styled.div`
  display: flex;
  flex-direction: column;
  width: 14px;
  height: 133px;
  margin-top: 7px;
  border: 1px solid #1a1a2a;
`;

const Band = styled.span<{ $c: string }>`
  flex: 1;
  background: ${(p) => p.$c};
  & + & { border-top: 1px solid #2a2a3a; }
`;

const BandLabels = styled.ol`
  display: flex;
  flex-direction: column;
  margin: 0;
  padding: 0;
  list-style: none;
  li { flex: 1 1 0; min-height: 0; line-height: 14px; color: #1a2036; }
  li:first-child, li:last-child { font-weight: 700; color: #0a1020; }
`;

const Brand = styled.div`
  position: absolute;
  right: 18px;
  top: 18px;
  display: flex;
  flex-direction: column;
  align-items: flex-end;
  color: #fff;
  strong { font-size: 21px; line-height: 23px; }
  span { font-size: 13px; line-height: 14px; }
`;

const bandColors = ["#ff0000", "#ffb000", "#ffff00", "#b0ff00", "#00f000", "#00ffb0", "#00ffff", "#00b0ff", "#0000ff"];
const bandText = ["9.786e7 Max", "8.6992e7", "7.6124e7", "6.5256e7", "5.4387e7", "4.3519e7", "3.2651e7", "2.1783e7", "1.0915e7", "46781 Min"];

const beams: Record<string, string> = {
  lowL: "655,378 683,384 832,480 820,480",
  lowR: "1016,343 990,357 857,480 872,480",
  horiz: "676,369 998,341 992,357 680,386",
  diag: "897,143 911,153 683,369 672,352",
  left: "698,151 710,159 674,352 684,372 682,388 655,378",
  top: "698,151 925,130 916,144 897,143 710,159",
  right: "908,132 925,130 1017,344 992,358 998,340 915,148",
};

type Zone = [string, number, number, number, number, number, number, string[]];

const CYAN = ["#2a90d2", "#2aa6d6", "#2cc4c8", "#3ad0b0"];
const BLUE = ["#1540d4", "#2a80dc", "#2c9ed8"];
const TEAL = ["#1a6aa8", "#1c8aa8", "#1458b0"];
const LIME = ["#2cc4a0", "#36d070", "#2aa6c6", "#2ab8b8"];
const MIX = ["#0404cc", "#1f60d8", "#2a90d6", "#2cb4cc"];

/* beam, axis start, axis end, blotch count, spread across, colours */
const zones: Zone[] = [
  ["top", 701, 155, 714, 153, 26, 5, CYAN],
  ["top", 722, 152, 740, 150, 7, 3, BLUE],
  ["top", 748, 150, 758, 149, 12, 4, CYAN],
  ["top", 778, 148, 790, 146, 7, 4, BLUE],
  ["top", 834, 143, 900, 137, 52, 5, MIX],
  ["top", 898, 138, 917, 134, 50, 9, CYAN],
  ["left", 706, 160, 705, 170, 10, 4, CYAN],
  ["left", 705, 172, 704, 179, 8, 3, CYAN],
  ["left", 699, 192, 695, 212, 14, 4, BLUE],
  ["left", 694, 214, 692, 227, 22, 5, CYAN],
  ["left", 681, 290, 679, 300, 8, 3, BLUE],
  ["left", 676, 306, 672, 325, 10, 5, BLUE],
  ["left", 672, 325, 664, 350, 26, 7, TEAL],
  ["left", 664, 350, 672, 384, 60, 12, MIX],
  ["left", 664, 342, 665, 346, 3, 1, LIME],
  ["right", 922, 148, 929, 152, 8, 4, BLUE],
  ["right", 931, 168, 936, 174, 12, 4, CYAN],
  ["right", 940, 184, 960, 226, 80, 6, CYAN],
  ["right", 958, 228, 972, 254, 36, 7, MIX],
  ["right", 968, 252, 982, 282, 46, 6, CYAN],
  ["right", 982, 280, 988, 292, 30, 6, LIME],
  ["right", 986, 298, 992, 312, 12, 5, MIX],
  ["right", 993, 312, 1003, 334, 50, 6, LIME],
  ["right", 1000, 340, 1003, 352, 36, 9, CYAN],
  ["diag", 907, 144, 895, 156, 50, 9, CYAN],
  ["diag", 701, 336, 681, 356, 54, 9, CYAN],
  ["diag", 700, 340, 690, 348, 8, 5, LIME],
  ["horiz", 699, 375, 706, 374, 10, 6, BLUE],
  ["horiz", 713, 373, 720, 372, 22, 8, CYAN],
  ["horiz", 715, 377, 717, 380, 4, 2, LIME],
  ["horiz", 998, 350, 1004, 344, 20, 7, CYAN],
  ["lowR", 1008, 348, 985, 368, 36, 6, CYAN],
  ["lowR", 972, 380, 968, 386, 6, 3, BLUE],
  ["lowR", 956, 395, 944, 408, 12, 3, BLUE],
  ["lowR", 932, 420, 927, 424, 4, 3, BLUE],
  ["lowR", 916, 432, 898, 448, 26, 4, MIX],
  ["lowR", 888, 458, 880, 466, 6, 3, BLUE],
  ["lowL", 756, 436, 808, 466, 50, 3, TEAL],
];

let seed = 11;
const rnd = () => {
  seed = (seed * 16807) % 2147483647;
  return seed / 2147483647;
};

const blot = (x: number, y: number, r: number) => {
  const k = 7;
  const pts: string[] = [];
  for (let i = 0; i < k; i++) {
    const a = (i / k) * Math.PI * 2;
    const d = r * (0.4 + rnd() * 0.9);
    pts.push((x + Math.cos(a) * d).toFixed(1) + "," + (y + Math.sin(a) * d).toFixed(1));
  }
  return pts.join(" ");
};

const blots = zones.map(([beam, x0, y0, x1, y1, n, spread, cols]) => {
  const len = Math.hypot(x1 - x0, y1 - y0) || 1;
  const nx = -(y1 - y0) / len;
  const ny = (x1 - x0) / len;
  const shapes = Array.from({ length: n }, () => {
    const t = rnd();
    const s = (rnd() * 2 - 1) * spread;
    return { pts: blot(x0 + (x1 - x0) * t + nx * s, y0 + (y1 - y0) * t + ny * s, 1.5 + rnd() * 2.2), c: cols[Math.floor(rnd() * cols.length)] };
  });
  return { beam, shapes };
});

/* short light scratches across the two wide members */
const scratches = [
  ...Array.from({ length: 13 }, () => {
    const t = 0.12 + rnd() * 0.8;
    const x = 904 - 226 * t + (rnd() * 12 - 6);
    const y = 148 + 212 * t + (rnd() * 12 - 6);
    return { beam: "diag", d: `M${x.toFixed(1)} ${y.toFixed(1)}l${(2 + rnd() * 2).toFixed(1)} ${(2 + rnd() * 5).toFixed(1)}` };
  }),
  ...Array.from({ length: 22 }, () => {
    const t = 0.15 + rnd() * 0.8;
    const x = 678 + 318 * t;
    const y = 377 - 28 * t + (rnd() * 14 - 9);
    return { beam: "horiz", d: `M${x.toFixed(1)} ${y.toFixed(1)}l1 ${(1 + rnd() * 7).toFixed(1)}` };
  }),
];

function Scene() {
  return (
    <SceneSvg viewBox="321 122 986 358" preserveAspectRatio="xMidYMid slice">
      <defs>
        {Object.entries(beams).map(([k, p]) => <clipPath key={k} id={"beam-" + k}><polygon points={p} /></clipPath>)}
      </defs>
      <g stroke="#111" strokeWidth="1">
        <rect x="680.500" y="447.500" width="267" height="6" fill="#fff" />
        <path d="M680 447h67v7h-67zM814 447h67v7h-67z" fill="#000" stroke="none" />
      </g>
      {Object.entries(beams).map(([k, p]) => (
        <g key={k} clipPath={`url(#beam-${k})`}>
          <polygon points={p} fill="#0404cc" stroke="#0404a0" strokeWidth="1" />
          {scratches.filter((s) => s.beam === k).map((s, i) => <path key={i} d={s.d} stroke="#3568e0" strokeWidth="1" />)}
          {blots.filter((b) => b.beam === k).map((b) => b.shapes.map((s, i) => <polygon key={i} points={s.pts} fill={s.c} opacity=".85" />))}
          {k === "left" && <path d="M698 151L655 378" stroke="#06105a" strokeWidth="4" />}
          {k === "right" && <path d="M915 148L998 341" stroke="#0b4a4e" strokeWidth="5" />}
          {k === "lowL" && <path d="M655 379L820 481" stroke="#060a50" strokeWidth="4" />}
          {k === "lowR" && <path d="M990 356L857 479" stroke="#08105e" strokeWidth="3" />}
        </g>
      ))}
      <g fontSize="9" fill="#111" textAnchor="middle">
        <text x="680" y="444">0.000</text>
        <text x="814" y="444">10.000</text>
        <text x="957" y="444">20.000 (m)</text>
        <text x="747" y="464">5.000</text>
        <text x="881" y="464">15.000</text>
      </g>
    </SceneSvg>
  );
}

const Triad = () => (
  <TriadSvg viewBox="1210 346 90 80">
    <defs>
      <radialGradient id="ball" cx=".4" cy=".35"><stop offset="0" stopColor="#5adada" /><stop offset="1" stopColor="#1a9c9c" /></radialGradient>
    </defs>
    <path d="M1237 415L1222 379" stroke="#157a1c" strokeWidth="2.500" />
    <path d="M1217.500 365l10.500 12.500-4.500 1.500-4.500 2z" fill="#149a1e" />
    <path d="M1237 415l20-7" stroke="#101048" strokeWidth="3" />
    <path d="M1252 410l20-8" stroke="#b01414" strokeWidth="2.500" />
    <path d="M1284 397l-15-.5 2 4 2.500 5z" fill="#cc1414" />
    <circle cx="1248.500" cy="411.500" r="4.800" fill="#0a0a8c" />
    <circle cx="1256.500" cy="381.500" r="5" fill="url(#ball)" />
    <g fontSize="9" textAnchor="middle">
      <text x="1217.500" y="358" fill="#3aa64a">Y</text>
      <text x="1292.500" y="394" fill="#e0405a">X</text>
      <text x="1257" y="409" fill="#6a1ab0">Z</text>
    </g>
  </TriadSvg>
);

function View3D() {
  return (
    <Viewport>
      <Scene />
      <Info>
        <p>A: Static Structural</p>
        <p>Equivalent Stress</p>
        <p>Type: Equivalent (von-Mises) Stress</p>
        <p>Unit: Pa</p>
        <p>Time: 1</p>
        <p>1/9/2017 10:23 PM</p>
      </Info>
      <Legend>
        <Bands>{bandColors.map((c) => <Band key={c} $c={c} />)}</Bands>
        <BandLabels>{bandText.map((t) => <li key={t}>{t}</li>)}</BandLabels>
      </Legend>
      <Brand><strong>ANSYS</strong><span>R17.0</span></Brand>
      <Triad />
    </Viewport>
  );
}

/* ---------- bottom area ---------- */

const TabStrip = styled.div`
  display: flex;
  align-items: stretch;
  flex: none;
  height: 14px;
  margin-bottom: 5px;
  background: #f0f0f0;
  border: 1px solid #777;
  border-right: 0;
`;

const Tab = styled.button<{ $on?: boolean }>`
  line-height: 12px;
  background: #fdfdfd;
  font-weight: ${(p) => (p.$on ? 700 : 400)};
`;

const SlantSvg = styled.svg<{ $wide?: boolean }>`
  flex: none;
  width: ${(p) => (p.$wide ? 11 : 8)}px;
  height: 12px;
  background: #fdfdfd;
`;

const Slant = ({ d, wide }: { d: string; wide?: boolean }) => (
  <SlantSvg $wide={wide} viewBox={wide ? "0 0 11 12" : "0 0 8 12"}><path d={d} stroke="#222" fill="none" /></SlantSvg>
);

const Bottom = styled.div`
  display: grid;
  grid-template-columns: minmax(0, 1fr) 403px;
  gap: 4px;
  flex: none;
  height: 42px;
`;

const GraphBody = styled.div`
  flex: 1;
  padding-top: 1px;
  background: #fff;
  border-left: 1px solid #8a8a8a;
`;

const DataArea = styled.div`
  flex: 1;
  min-height: 0;
  overflow: hidden;
  background: #a0a0a0;
  border-left: 1px solid #8a8a8a;
`;

const DataTable = styled.table`
  width: 227px;
  border-collapse: separate;
  border-spacing: 0;
  table-layout: fixed;
  background: #f0f0f0;
  th, td {
    height: 15px;
    padding: 0 0 0 2px;
    text-align: left;
    font-weight: 400;
    line-height: 12px;
    white-space: nowrap;
    border-right: 1px solid #b0b0b0;
    border-bottom: 1px solid #b0b0b0;
  }
  th.min { color: #c8323c; }
  th.max { color: #2a962e; }
  col.idx { width: 13px; }
  col.time { width: 43px; }
`;

const CheckLabel = styled.label`
  display: flex;
  align-items: center;
  gap: 3px;
`;

const CheckWrap = styled.span`
  display: grid;
  input, svg { grid-area: 1 / 1; width: 11px; height: 11px; }
  input {
    appearance: none;
    margin: 0;
    border: 1px solid #b8b8b8;
    background: #fff;
  }
  svg { pointer-events: none; }
`;

const SeriesCheck = ({ name }: { name: string }) => (
  <CheckLabel>
    <CheckWrap>
      <input type="checkbox" defaultChecked />
      <svg viewBox="0 0 11 11"><path d="M2.500 5l2 2.500 4-5" stroke="#111" strokeWidth="1.600" fill="none" /></svg>
    </CheckWrap>
    {name}
  </CheckLabel>
);

function BottomPanels() {
  return (
    <Bottom>
      <Panel>
        <Head title="Graph" />
        <GraphBody>
          <Toolbar $plain>
            <Grip />
            <Caption as="span" $w={48}>Animation</Caption>
            <Tool n="play" /><Tool n="stop" on tight /><Sep />
            <Tool n="frames1" on tight /><Tool n="frames2" tight /><Sep />
            <Tool n="bulb" tight />
            <Combo id="frames" label="Frames" value="10 Frames" w={112} white /><Gap $w={5} />
            <Combo id="seconds" label="Duration" value="2 Sec (Auto)" w={112} white /><Gap $w={4} />
            <Sep /><Tool n="save" /><Sep /><Tool n="zoomPlay" tight /><Sep /><Gap $w={1} />
            <LabelButton $w={70} $off $gap={7}><Icon n="cycles" />3 Cycles</LabelButton>
          </Toolbar>
        </GraphBody>
      </Panel>
      <Panel>
        <Head title="Tabular Data" />
        <DataArea>
          <DataTable>
            <colgroup><col className="idx" /><col className="time" /><col /><col /></colgroup>
            <thead>
              <tr>
                <th />
                <th>Time [s]</th>
                <th className="min"><SeriesCheck name="Minimum [Pa]" /></th>
                <th className="max"><SeriesCheck name="Maximum [Pa]" /></th>
              </tr>
            </thead>
            <tbody><tr><td>1</td><td>1.</td><td>46781</td><td>9.786e+007</td></tr></tbody>
          </DataTable>
        </DataArea>
      </Panel>
    </Bottom>
  );
}

export default function App() {
  return (
    <Page>
      <GlobalStyle />
      <TitleBar>
        <Svg viewBox="0 0 16 16">
          <path d="M1-3h11v9c-2 3-9 3-11 0z" fill="#c01a22" /><path d="M3.500 5V1l3 3 3-3v4" stroke="#fff" strokeWidth="1.500" fill="none" />
        </Svg>
        <TitleText>A : Static Structural - Mechanical [ANSYS Multiphysics]</TitleText>
        <WindowButtons>
          <WindowButton aria-label="Minimize"><svg width="10" height="8"><path d="M.5.5h9v3.500h-9z" fill="#fff" stroke="#556" /></svg></WindowButton>
          <WindowButton aria-label="Restore"><svg width="10" height="8"><path d="M1.500-1v6h6V-1zM4 0h2v2H4z" fill="#fff" stroke="#556" /></svg></WindowButton>
          <WindowButton aria-label="Close" $close><svg width="10" height="8"><path d="M2-2l6 6M8-2L2 4" stroke="#fff" strokeWidth="2" /></svg></WindowButton>
        </WindowButtons>
      </TitleBar>
      <Toolbars />
      <Main>
        <Column $gap={4}>
          <Outline />
          <Details />
        </Column>
        <Column>
          <View3D />
          <TabStrip>
            <Slant d="M0 0l6 12" />
            <Tab $on>Geometry</Tab>
            <Slant wide d="M8.500 0L2 12M5.500 6l3 6" />
            <Tab>Print Preview</Tab>
            <Slant wide d="M8.500 0L2 12M2 0l6.500 12" />
            <Tab>Report Preview</Tab>
            <Slant d="M7.500 0L1 12" />
          </TabStrip>
          <BottomPanels />
        </Column>
      </Main>
    </Page>
  );
}
